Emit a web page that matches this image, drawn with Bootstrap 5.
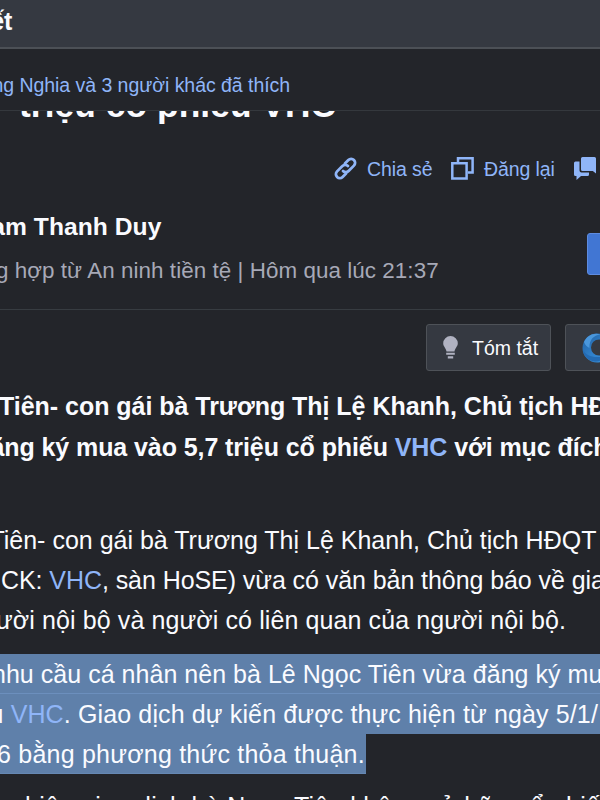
<!DOCTYPE html>
<html lang="vi">

<head>
  <meta charset="UTF-8">
  <meta name="viewport" content="width=device-width, initial-scale=1.0">
  <title>Chi tiết</title>
  <link rel="stylesheet" href="https://cdn.jsdelivr.net/npm/bootstrap@5.3.3/dist/css/bootstrap.min.css">
  <script src="https://cdn.jsdelivr.net/npm/bootstrap@5.3.3/dist/js/bootstrap.bundle.min.js"></script>
  <style>
    body {
      width: 600px;
      height: 800px;
      background: #23252a;
      color: #fafbff;
      font-family: "Liberation Sans", Arial, sans-serif;
      font-size: 25px;
      line-height: 40px;
    }

    a { color: #8fb5f8; text-decoration: none; }

    .topbar {
      height: 49px;
      background: #353941;
      border-bottom: 2px solid #4c5056;
      line-height: 42px;
    }

    .likes {
      height: 62px;
      border-bottom: 1px solid #34383d;
      font-size: 19.5px;
      line-height: 73px;
      letter-spacing: -.04px;
    }

    .headline { height: 27px; font-size: 35.3px; }
    .headline h1 { font-size: inherit; line-height: 40px; margin: -26.5px 0 0 19px; letter-spacing: .08px; }

    .actions { height: 62px; font-size: 19.5px; line-height: 24px; padding: 0 4px 1px 334px; letter-spacing: -.1px; }
    .actions svg { width: 23px; height: 23px; margin-right: 10px; }

    .author { height: 110px; border-bottom: 1px solid #373c41; }
    .author-name { font-size: 24.6px; line-height: 34px; padding-top: 10px; letter-spacing: .05px; }
    .author-meta { font-size: 22.4px; line-height: 30px; color: #a7a9b7; padding-top: 12px; letter-spacing: .06px; }
    .follow {
      width: 80px;
      height: 42px;
      margin-top: 33px;
      background: #4176d3;
      border: 1px solid #5e8ce0;
      border-radius: 3px;
    }

    .tools { height: 76px; padding: 14px 0 0 426px; gap: 14px; }
    .tool {
      height: 47px;
      background: #353941;
      border: 1px solid #4e5258;
      border-radius: 3px;
      color: #fafbff;
      font-size: 19.5px;
      line-height: 24px;
    }

    .sapo { height: 134px; font-weight: 700; }
    .sapo .line + .line { padding-top: 1px; }
    .para { height: 120px; margin-bottom: 14px; }
    .line { display: block; height: 40px; }
    .picked { background: #5f80aa; }
    .picked-seam { box-shadow: inset 0 -1px #6c8fbd; }
    .picked-last { width: 366px; box-shadow: inset 0 -1px #6688b3; }
  </style>
</head>

<body class="overflow-hidden">
  <header class="topbar overflow-hidden text-nowrap fw-bold"><span style="margin-left: -9.8px">ết</span></header>

  <div class="likes overflow-hidden text-nowrap">
    <a href="#" style="margin-left: -7.6px">ng Nghia và 3 người khác đã thích</a>
  </div>

  <!-- title is scrolled under the likes bar -->
  <div class="headline overflow-hidden text-nowrap">
    <h1 class="fw-bold">triệu cổ phiếu VHC</h1>
  </div>

  <div class="actions d-flex align-items-center text-nowrap overflow-hidden">
    <a href="#" class="d-flex align-items-center flex-shrink-0" style="width: 117px">
      <svg viewBox="0 0 24 24" fill="none" stroke="currentColor" stroke-width="2.9" stroke-linecap="round" stroke-linejoin="round">
        <path d="M9.400 14.600a4 4 0 0 0 5.800 0l5.600-5.600a4 4 0 0 0-5.800-5.800l-3.600 3.600" />
        <path d="M14.600 9.400a4 4 0 0 0-5.800 0l-5.600 5.600a4 4 0 0 0 5.800 5.800l3.600-3.600" />
      </svg>
      <span>Chia sẻ</span>
    </a>
    <a href="#" class="d-flex align-items-center flex-shrink-0" style="width: 123px">
      <svg viewBox="0 0 23 23" fill="none" stroke="currentColor" stroke-width="2.5">
        <path d="M1.300 6.300h14.300v15.200H1.300z" />
        <path d="M7 5V1.300h14.600v14.200H17" />
      </svg>
      <span>Đăng lại</span>
    </a>
    <a href="#" class="flex-shrink-0 d-flex">
      <svg viewBox="0 0 23 23" fill="currentColor">
        <path d="M8.500 0H20.500a1.500 1.500 0 0 1 1.500 1.500V16.500L18.800 14H8.500A1.500 1.500 0 0 1 7 12.500V1.500A1.500 1.500 0 0 1 8.500 0z" />
        <path d="M1.500 4.500H5.500V13.500A2 2 0 0 0 7.500 15.500H15V17.500A1.500 1.500 0 0 1 13.500 19H7L2.500 23V19H1.500A1.500 1.500 0 0 1 0 17.500V6A1.500 1.500 0 0 1 1.500 4.500z" />
      </svg>
    </a>
  </div>

  <div class="author d-flex text-nowrap overflow-hidden">
    <div class="flex-shrink-0" style="width: 587px">
      <div class="author-name fw-bold" style="margin-left: -8.7px">am Thanh Duy</div>
      <div class="author-meta" style="margin-left: -4px">g hợp từ An ninh tiền tệ | Hôm qua lúc 21:37</div>
    </div>
    <div class="follow flex-shrink-0"></div>
  </div>

  <div class="tools d-flex overflow-hidden">
    <button class="tool d-flex align-items-center flex-shrink-0 p-0" style="width: 125px">
      <svg width="15" height="23" viewBox="0 0 15 23" fill="#b0b2c1" style="margin: 0 14px 0 16px">
        <path d="M7.500 0a7.300 7.300 0 0 1 7.300 7.300c0 3.300-2.800 4.700-3.300 8.200h-8C3 12 .2 10.600.2 7.300A7.300 7.300 0 0 1 7.500 0z" />
        <path d="M3.200 16.700h8.600v2H3.200zM4.800 20.300h5.400v2.200H4.800z" />
      </svg>
      <span>Tóm tắt</span>
    </button>
    <button class="tool flex-shrink-0 p-0 text-start d-flex align-items-center" style="width: 120px">
      <svg width="30" height="30" viewBox="0 0 30 30" style="margin-left: 16px">
        <defs>
          <linearGradient id="swirl" x1="0" y1="0" x2="1" y2="1">
            <stop offset="0" stop-color="#225f9f" />
            <stop offset=".5" stop-color="#2f7fc9" />
            <stop offset="1" stop-color="#3c94dd" />
          </linearGradient>
        </defs>
        <path d="M15 .5a14.500 14.500 0 1 0 14.500 14.500A14.500 14.500 0 0 0 15 .5zm2 6a8 8 0 1 1 0 16 8 8 0 0 1 0-16z" fill="url(#swirl)" fill-rule="evenodd" />
        <path d="M2 9C5 2 12-1 19 1.500 12 2 7 7 7.500 15 5 14 3 12 2 9z" fill="#4a97dc" />
        <path d="M1 17c3 5 8 7.500 16 7 4-.3 7-2 9-4-3 6-8 9-13 8.500C6 28 1.500 23 1 17z" fill="#246bb3" />
      </svg>
    </button>
  </div>

  <article class="text-nowrap">
    <div class="sapo">
      <span class="line" style="margin-left: -1px; letter-spacing: -.03px">Tiên- con gái bà Trương Thị Lệ Khanh, Chủ tịch HĐQT</span>
      <span class="line" style="margin-left: -9.6px; letter-spacing: -.08px">ăng ký mua vào 5,7 triệu cổ phiếu <a href="#">VHC</a> với mục đích</span>
    </div>

    <div class="para">
      <span class="line" style="margin-left: -10.6px">Tiên- con gái bà Trương Thị Lệ Khanh, Chủ tịch HĐQT</span>
      <span class="line" style="margin-left: 1px; letter-spacing: -.07px">CK: <a href="#">VHC</a>, sàn HoSE) vừa có văn bản thông báo về giao</span>
      <span class="line" style="margin-left: -4px; letter-spacing: .1px">ười nội bộ và người có liên quan của người nội bộ.</span>
    </div>

    <!-- selected paragraph -->
    <div class="para" style="margin-bottom: 12px">
      <span class="line picked picked-seam" style="text-indent: -8px; letter-spacing: .03px">nhu cầu cá nhân nên bà Lê Ngọc Tiên vừa đăng ký mua</span>
      <span class="line picked" style="text-indent: -10.5px; letter-spacing: .13px">u <a href="#">VHC</a>. Giao dịch dự kiến được thực hiện từ ngày 5/1/</span>
      <span class="line picked picked-last" style="text-indent: -3px; letter-spacing: .22px">6 bằng phương thức thỏa thuận.</span>
    </div>

    <div class="para">
      <span class="line" style="margin-left: 25px; letter-spacing: .35px">hiện giao dịch bà Ngọc Tiên không sở hữu cổ phiếu</span>
    </div>
  </article>
</body>

</html>
